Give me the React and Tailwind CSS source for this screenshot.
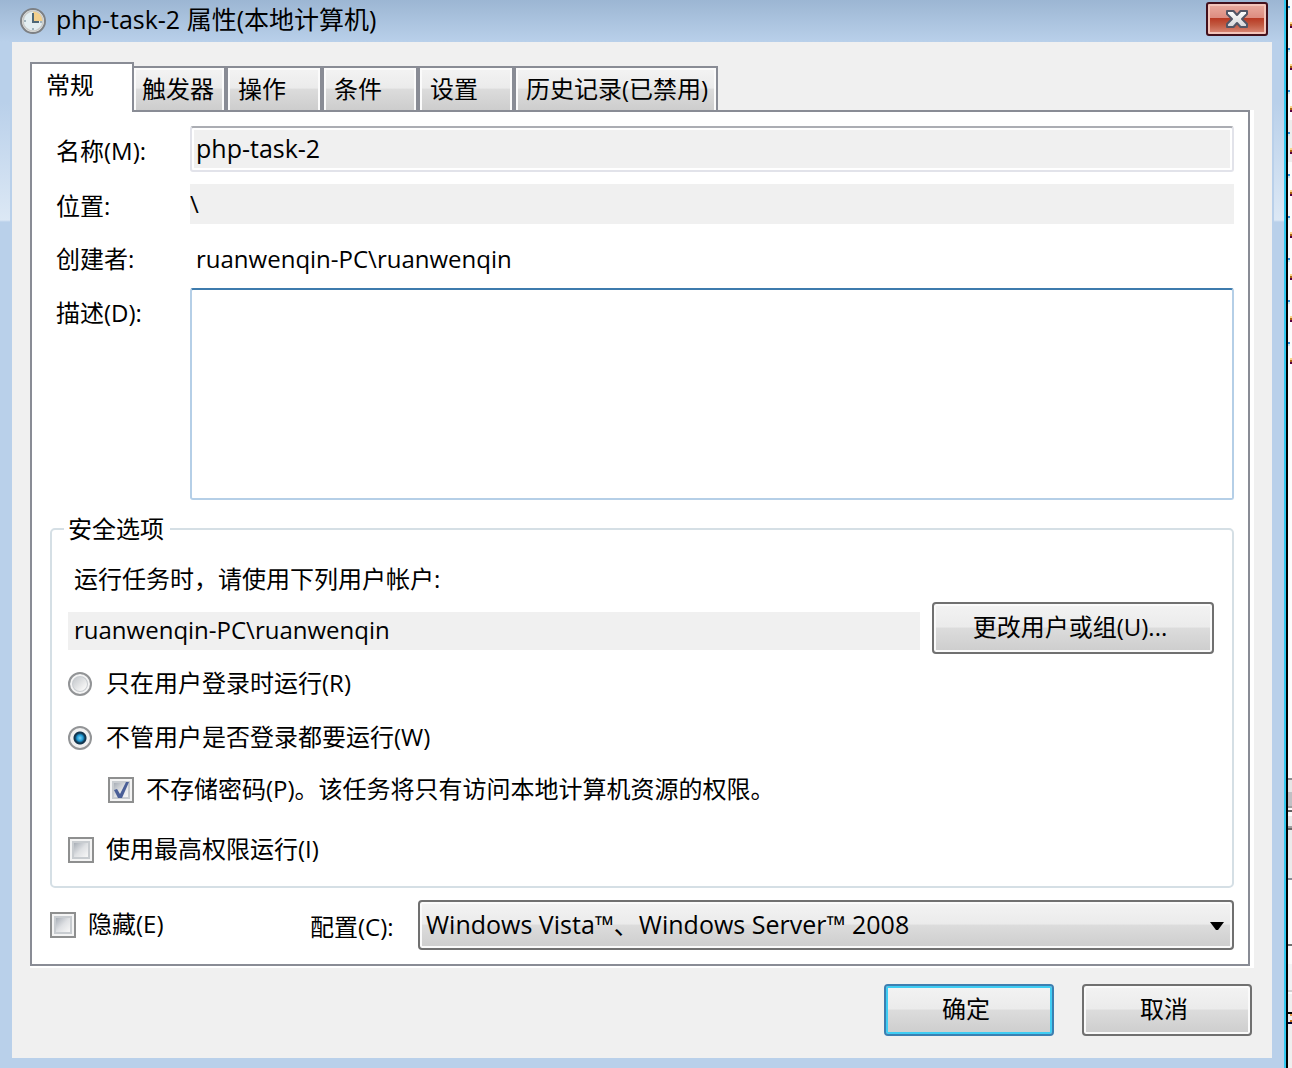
import React, { useState } from "react";

const FONT = "font-['Open_Sans','Noto_Sans_CJK_SC',sans-serif]";
const GLOSSY =
  "bg-[linear-gradient(to_bottom,#f3f3f3_0%,#ebebeb_48%,#dcdcdc_50%,#cdcdcd_100%)]";

function ClockIcon() {
  return (
    <svg width="26" height="26" viewBox="0 0 26 26" aria-hidden="true">
      <circle cx="13" cy="13" r="12" fill="#f4f4f0" stroke="#7d8084" strokeWidth="2" />
      <circle cx="13" cy="13" r="10" fill="#e3eef2" stroke="#c9cbca" strokeWidth="1.5" />
      <path d="M13 13V3.5A9.5 9.5 0 0 1 22.5 13Z" fill="#f2cf8d" />
      <path d="M13 5v9h6" fill="none" stroke="#4e6878" strokeWidth="2" />
      <path d="M13 20v2M4 13h2M20 14h2" stroke="#8fa3ad" strokeWidth="1.5" />
    </svg>
  );
}

function CloseIcon() {
  return (
    <svg width="24" height="18" viewBox="0 0 24 18" aria-hidden="true">
      <defs>
        <linearGradient id="cross" x1="0" y1="0" x2="0" y2="1">
          <stop offset="0" stopColor="#ffffff" />
          <stop offset="1" stopColor="#d5d5d8" />
        </linearGradient>
      </defs>
      <path
        d="M2 1H8.500L12 5L15.500 1H22V4L17 9L22 14V17H15.500L12 13L8.500 17H2V14L7 9L2 4Z"
        fill="url(#cross)"
        stroke="#535666"
        strokeWidth="2"
        strokeLinejoin="round"
      />
    </svg>
  );
}

function TitleBar() {
  return (
    <header className="flex h-[42px] items-start bg-[linear-gradient(to_bottom,#9cb6d3,#b9d0ea)] pl-5 pr-4">
      <span className="mt-2 block">
        <ClockIcon />
      </span>
      <h1 className="ml-[10px] flex-1 whitespace-nowrap text-[25px] leading-[38px]">
        php-task-2 属性(本地计算机)
      </h1>
      <button
        type="button"
        aria-label="关闭"
        className="mt-[2px] flex h-[34px] w-[62px] items-center justify-center rounded-[3px] border-2 border-[#43101c] bg-[linear-gradient(to_bottom,#eaaca0_0%,#dd8c80_46%,#b93a24_48%,#c25a42_70%,#dc8d7c_100%)] shadow-[inset_0_0_0_2px_#f3c4ba]"
      >
        <CloseIcon />
      </button>
    </header>
  );
}

const TABS = [
  { name: "触发器", width: "w-[94px]", pad: "pl-2" },
  { name: "操作", width: "w-[96px]", pad: "pl-[10px]" },
  { name: "条件", width: "w-[96px]", pad: "pl-[10px]" },
  { name: "设置", width: "w-[96px]", pad: "pl-[10px]" },
  { name: "历史记录(已禁用)", width: "w-[204px]", pad: "pl-[10px]" },
];

function Tabs() {
  return (
    <div role="tablist" className="relative z-10 -mb-[2px] flex items-end">
      <button
        type="button"
        role="tab"
        aria-selected="true"
        className="h-[50px] w-[104px] border-2 border-b-0 border-[#898c95] bg-white pb-[6px] pl-[14px] text-left text-2xl leading-8"
      >
        常规
      </button>
      <div className="-ml-[2px] flex">
        {TABS.map((t) => (
          <button
            key={t.name}
            type="button"
            role="tab"
            aria-selected="false"
            className={`h-[46px] whitespace-nowrap border-2 border-[#898c95] text-left text-2xl leading-8 shadow-[inset_2px_2px_0_#fbfbfb,inset_-2px_0_0_#fbfbfb] ${GLOSSY} ${t.width} ${t.pad}`}
          >
            {t.name}
          </button>
        ))}
      </div>
    </div>
  );
}

function PushButton({ children, className, primary }) {
  return (
    <button
      type="button"
      className={`h-[52px] shrink-0 whitespace-nowrap rounded-[4px] border-2 pb-[2px] pr-[6px] text-2xl leading-8 ${GLOSSY} ${
        primary
          ? "border-[#3c7fb1] shadow-[inset_0_0_0_2px_#3fcdf3]"
          : "border-[#707070] shadow-[inset_0_0_0_2px_#fafafa]"
      } ${className}`}
    >
      {children}
    </button>
  );
}

function Check({ children, checked, className = "" }) {
  const [on, setOn] = useState(!!checked);
  return (
    <label className={`flex h-9 items-center gap-3 whitespace-nowrap text-2xl ${className}`}>
      <span className="relative block size-[26px] shrink-0">
        <input
          type="checkbox"
          checked={on}
          onChange={(e) => setOn(e.target.checked)}
          className="block size-[26px] appearance-none border-2 border-[#8e8f8f] bg-[linear-gradient(135deg,#abb1b9_20%,#dfe1e4_50%,#f6f6f6_80%)] shadow-[inset_0_0_0_2px_#f4f4f4,inset_0_0_0_4px_#c8ccd0]"
        />
        {on && (
          <svg className="pointer-events-none absolute inset-0" width="26" height="26" viewBox="0 0 26 26" aria-hidden="true">
            <path d="M6 13L9 12L12 17L18 5L21 5L14 21H10Z" fill="#4a5f97" />
          </svg>
        )}
      </span>
      <span className="pb-[2px]">{children}</span>
    </label>
  );
}

function Radio({ children, checked, onChange, className = "" }) {
  return (
    <label className={`flex h-9 items-center gap-[14px] whitespace-nowrap text-2xl ${className}`}>
      <input
        type="radio"
        name="logon"
        checked={checked}
        onChange={onChange}
        className="size-6 shrink-0 appearance-none rounded-full border-2 border-[#929496] bg-[linear-gradient(135deg,#b4b9be,#f4f4f4_70%)] shadow-[inset_0_0_0_2px_#f4f4f4,inset_0_0_0_3px_#c8ccd0] checked:bg-[radial-gradient(circle_at_center,#7fd4f4_0px,#1e9bd7_3px,#12364f_5px,#12364f_6px,#f0f0f0_7px)] checked:shadow-none"
      />
      <span className="pb-[2px]">{children}</span>
    </label>
  );
}

/* Sliver of the window lying behind the dialog. */
function BackgroundWindow() {
  return (
    <svg width="4" height="1068" className="shrink-0 self-start" aria-hidden="true">
      <rect width="4" height="1068" fill="#fcfcfc" />
      <rect y="120" width="4" height="42" fill="#ededed" />
      {[0, 1, 2, 3, 4, 5, 6, 7, 8].map((i) => (
        <g key={i}>
          <rect y={6 + i * 42} width="2" height="2" fill="#2b8ed6" />
          <rect y={8 + i * 42} width="2" height="2" fill="#c7f2fa" />
          <rect x="2" y={22 + i * 42} width="2" height="2" fill="#fbd68a" />
          <rect x="2" y={24 + i * 42} width="2" height="2" fill="#a96310" />
          <rect x="2" y={26 + i * 42} width="2" height="2" fill="#56003c" />
        </g>
      ))}
      <rect y="778" width="4" height="2" fill="#8b8b8f" />
      <rect y="780" width="4" height="12" fill="#e6e6e6" />
      <rect y="792" width="4" height="14" fill="#c0c0c4" />
      <rect y="806" width="4" height="2" fill="#a0a0a0" />
      <rect y="810" width="4" height="2" fill="#606060" />
      <rect y="816" width="4" height="62" fill="#ebebeb" />
      <rect y="826" width="4" height="2" fill="#a0a0a0" />
      <rect y="828" width="4" height="2" fill="#696969" />
      <rect y="878" width="4" height="2" fill="#898c95" />
      <rect y="944" width="4" height="2" fill="#707070" />
      <rect y="964" width="4" height="26" fill="#f2f2f4" />
      <rect y="990" width="4" height="2" fill="#d0d0d0" />
      <rect y="994" width="4" height="74" fill="#efefef" />
      <rect y="1012" width="4" height="2" fill="#000" />
      <rect x="2" y="1014" width="2" height="2" fill="#e8a050" />
      <rect x="2" y="1020" width="2" height="2" fill="#c87820" />
      <rect y="1022" width="4" height="2" fill="#000030" />
    </svg>
  );
}

const SIDE =
  "w-[10px] shrink-0 bg-[linear-gradient(to_bottom,#b9d0ea_0px,#b9d0ea_60px,#dce8f5_178px,#b9d0ea_180px)]";

export default function App() {
  const [always, setAlways] = useState(true);
  return (
    <div className={`flex min-h-screen overflow-hidden bg-[#fcfcfc] text-2xl text-black ${FONT}`}>
      <div className="flex min-w-0 flex-1 flex-col bg-[#b9d0ea]">
        <TitleBar />
        <div className="flex flex-1 gap-[2px]">
          <div className={SIDE} />
          <main className="mb-[10px] flex min-w-0 flex-1 flex-col bg-[#f0f0f0] px-[18px] pt-5">
            <Tabs />
            <section
              role="tabpanel"
              className="mr-1 flex flex-col border-2 border-[#898c95] bg-white pb-[14px] pl-[18px] pr-[14px] pt-[14px] shadow-[4px_0_0_#fff,0_2px_0_#fff,4px_2px_0_#fff]"
            >
              <div className="flex items-center pl-[6px]">
                <label htmlFor="name" className="w-[134px] shrink-0 pt-1">名称(M):</label>
                <input
                  id="name"
                  readOnly
                  defaultValue="php-task-2"
                  className="h-[46px] min-w-0 flex-1 rounded-[3px] border-2 border-[#e2e3ea] border-t-[#abadb3] bg-[#f0f0f0] px-1 pb-[2px] text-[25px] shadow-[inset_0_0_0_2px_#fff]"
                />
              </div>
              <div className="mt-3 flex items-center pl-[6px]">
                <label htmlFor="location" className="w-[134px] shrink-0 pt-1">位置:</label>
                <input id="location" readOnly defaultValue="\" className="h-10 min-w-0 flex-1 bg-[#f0f0f0] pb-[2px]" />
              </div>
              <div className="mt-4 flex h-10 items-center pb-[2px] pl-[6px]">
                <span className="w-[134px] shrink-0">创建者:</span>
                <span className="pl-[6px]">ruanwenqin-PC\ruanwenqin</span>
              </div>
              <div className="mt-2 flex items-start pl-[6px]">
                <label htmlFor="desc" className="w-[134px] shrink-0 pt-2 leading-[34px]">描述(D):</label>
                <textarea
                  id="desc"
                  className="h-[212px] min-w-0 flex-1 resize-none rounded-[3px] border-2 border-[#b5cfe7] border-t-[#3d7bad] bg-white px-1"
                />
              </div>

              <fieldset className="mt-3 min-w-0 rounded-[5px] border-2 border-[#d5dfe5] pb-[18px] pl-3 pr-[18px]">
                <legend className="pl-1 pr-[6px] leading-[34px]">安全选项</legend>
                <div className="pl-1">
                  <p className="mt-4 pb-[2px] pl-[6px] leading-[34px]">运行任务时，请使用下列用户帐户:</p>
                  <div className="mt-1 flex items-end gap-3">
                    <input
                      aria-label="用户帐户"
                      readOnly
                      defaultValue="ruanwenqin-PC\ruanwenqin"
                      className="mb-1 h-[38px] min-w-0 flex-1 bg-[#f0f0f0] px-[6px] pb-1"
                    />
                    <PushButton className="w-[282px]">更改用户或组(U)...</PushButton>
                  </div>
                  <Radio className="mt-3" checked={!always} onChange={() => setAlways(false)}>
                    只在用户登录时运行(R)
                  </Radio>
                  <Radio className="mt-[18px]" checked={always} onChange={() => setAlways(true)}>
                    不管用户是否登录都要运行(W)
                  </Radio>
                  <Check className="ml-10 mt-4" checked>
                    不存储密码(P)。该任务将只有访问本地计算机资源的权限。
                  </Check>
                  <Check className="mt-6">使用最高权限运行(I)</Check>
                </div>
              </fieldset>

              <div className="mt-3 flex items-center">
                <div className="w-[260px] shrink-0">
                  <Check>隐藏(E)</Check>
                </div>
                <label htmlFor="config" className="w-[108px] shrink-0 pt-1">配置(C):</label>
                <div className="relative min-w-0 flex-1">
                  <select
                    id="config"
                    className={`block h-[50px] w-full appearance-none rounded-[4px] border-2 border-[#707070] pl-[6px] pr-10 text-[25px] shadow-[inset_0_0_0_2px_#fafafa] ${GLOSSY}`}
                  >
                    <option>Windows Vista™、Windows Server™ 2008</option>
                  </select>
                  <svg className="pointer-events-none absolute right-[10px] top-[22px]" width="14" height="8" viewBox="0 0 14 8" aria-hidden="true">
                    <path d="M0 0H14L8 8H6Z" fill="#000" />
                  </svg>
                </div>
              </div>
            </section>
            <footer className="mt-[18px] flex justify-end gap-7 pb-[22px] pr-[2px]">
              <PushButton primary className="w-[170px]">确定</PushButton>
              <PushButton className="w-[170px]">取消</PushButton>
            </footer>
          </main>
          <div className={SIDE} />
        </div>
      </div>
      <div className="w-[2px] shrink-0 bg-[#33c8ee]" />
      <div className="w-[2px] shrink-0 bg-black" />
      <BackgroundWindow />
    </div>
  );
}
